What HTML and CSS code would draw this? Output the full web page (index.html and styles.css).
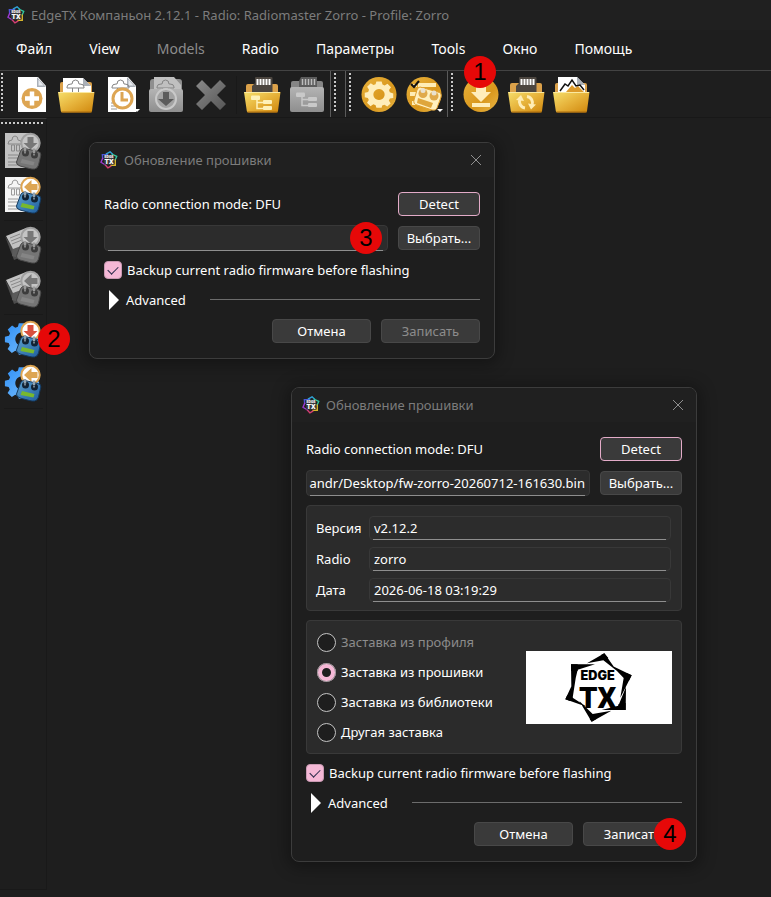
FILE: index.html
```html
<!DOCTYPE html>
<html lang="ru">
<head>
<meta charset="utf-8">
<title>EdgeTX Компаньон 2.12.1</title>
<link rel="stylesheet" href="styles.css">
</head>
<body>
<svg class="defs" width="0" height="0" aria-hidden="true">
  <defs>
    <linearGradient id="gold" x1="0" y1="0" x2="1" y2="1"><stop offset="0" stop-color="#f6df6c"/><stop offset=".5" stop-color="#e6b23a"/><stop offset="1" stop-color="#cf860c"/></linearGradient>
    <linearGradient id="amber" x1="0" y1="0" x2="1" y2="1"><stop offset="0" stop-color="#e8b23c"/><stop offset=".6" stop-color="#d9971c"/><stop offset="1" stop-color="#e9b747"/></linearGradient>
    <linearGradient id="grey" x1="0" y1="0" x2="0" y2="1"><stop offset="0" stop-color="#b4b4b4"/><stop offset="1" stop-color="#8e8e8e"/></linearGradient>
    <linearGradient id="steel" x1="0" y1="0" x2="1" y2="1"><stop offset="0" stop-color="#8a8a8a"/><stop offset="1" stop-color="#565656"/></linearGradient>
    <linearGradient id="blue" x1="0" y1="0" x2="1" y2="1"><stop offset="0" stop-color="#5fa3d0"/><stop offset="1" stop-color="#1d5c9c"/></linearGradient>
    <linearGradient id="sky" x1="0" y1="0" x2="1" y2="1"><stop offset="0" stop-color="#2f8ff5"/><stop offset="1" stop-color="#7fc3ff"/></linearGradient>
    <symbol id="logo" viewBox="0 0 20 20">
      <g fill="none" stroke-width="1.5">
        <path d="M3 9 2.6 4l6.5 0" stroke="#4b57d8"/><path d="M6.5 3.4 11.2.9 14.4 4" stroke="#2fa3d8"/>
        <path d="M13 3.6 18.6 6 16.6 10.6" stroke="#2fc7a0"/><path d="M17 9.5v6.3h-5.4" stroke="#d8b62c"/>
        <path d="M12.6 16.6 8.8 18.8 5 14.4" stroke="#d83f72"/><path d="M3.2 7.6 1.1 12.6 6.2 15.6" stroke="#a03ad6"/>
      </g>
      <path d="M4.500 4.500h11v10.500h-11z" fill="#3a3a3c"/>
      <text x="10" y="7.600" class="logo-edge">EDGE</text>
      <text x="10" y="14.600" class="logo-tx">TX</text>
    </symbol>
    <symbol id="page" viewBox="0 0 38 38">
      <path d="M6 1h20l8 9v26H6z" fill="#fff"/><path d="M25 1l9 10h-9z" fill="#aab0b8"/><path d="M26.500 3.500l5 6h-5z" fill="#e8ebef"/>
    </symbol>
    <symbol id="sketch" viewBox="0 0 38 38">
      <path d="M10 11q0-3 4-3h1q0-4 3.500-4T22 8h1q4 0 4 3v1H10zM15.500 12v4M21.500 12v4M14 16.500h9" fill="none" stroke="#858585"/>
    </symbol>
    <symbol id="front" viewBox="0 0 38 38">
      <path d="M1 16h36.500l-2.500 19q-.2 1.500-2 1.500H6q-2 0-2.200-1.500z" fill="url(#gold)"/><path d="M1.500 16.500h35.500" stroke="#fbe9a0"/>
      <path d="M4.500 36h30" stroke="#a8690c"/>
    </symbol>
    <symbol id="card" viewBox="0 0 38 38">
      <path d="M12 2q0-1 1-1h15.500q1 0 1 1v16H9v-8l3-3z" class="card-body"/>
      <path d="M14.500 3v6M17.500 3v6M20.500 3v6M23.500 3v6M26.500 3v6" stroke-width="2" class="card-pins"/>
    </symbol>
    <symbol id="tree" viewBox="0 0 38 38">
      <g class="tree"><path d="M14 24v8.500h8M14 26.500h8" fill="none" stroke-width="1.500"/><rect x="8" y="19.500" width="9" height="4.500" rx="1"/><rect x="20" y="24" width="9" height="4" rx="1"/><rect x="20" y="30" width="9" height="4" rx="1"/></g>
    </symbol>
    <symbol id="gear" viewBox="-20 -20 40 40">
      <path fill-rule="evenodd" d="M-3.500-15h7l1.200 4.200 2.800 1.200L11.300-12 16-7.200l-2.600 3.800 1 2.900L19 1v6l-4.400.8-1.500 2.800L15.500 14.500 11 18.500 7.300 16 4.300 17.200 3.500 20h-7l-1-3.200-3-1.200L-11.300 18-16 13.500l2.400-3.800L-14.800 7-19 6V0l4.500-1 1.200-3L-15.800-8-11-12.500l3.600 2.400 2.800-1.100zM0-5a7.500 7.500 0 1 0 .01 0z" transform="translate(0 -2.500)"/>
    </symbol>
    <symbol id="down" viewBox="0 0 22 22"><circle cx="11" cy="11" r="9.200" class="ring"/><path d="M8 5h6v6h4l-7 6.500L4 11h4z" class="arrow"/></symbol>
    <symbol id="left" viewBox="0 0 22 22"><circle cx="11" cy="11" r="9.200" class="ring"/><path d="M18 8v6h-6v4L4.500 11 12 4v4z" class="arrow"/></symbol>
    <symbol id="handset" viewBox="0 0 26 24">
      <path d="M4.500 5q1-3 4.500-2.500l13 3q3.300.8 2.800 3.500L22.500 19q-1 3.500-4 4-2 .3-5-.5L4 20q-4-1.500-3.500-4z" class="shell"/>
      <circle cx="9.500" cy="7" r="3.500" class="well"/><circle cx="18.500" cy="9" r="3.500" class="well"/>
      <path d="M9 1v4.500M18 2.500v4.500" stroke-width="2.500" class="stick"/><path d="M9 5.500v2M18 7.500v2" stroke-width="1.500" class="stick"/>
      <path d="M6 13l12.500 3-1 3.500L4.500 17z" class="lcd"/>
    </symbol>
    <symbol id="sheet" viewBox="0 0 38 38">
      <path d="M1 1h25v35H1z" class="paper"/>
      <path d="M4 12q0-4 4-4 0-4 3-4t3 4q4 0 4 4zM7.500 13v6h3v-6zM12.500 13v6h3v-6zM4 23h10M4 26h10M4 30h12M4 33h12" class="ink"/>
    </symbol>
    <symbol id="cards" viewBox="0 0 38 38">
      <path d="M1 10l14 22-5 2z" fill="#4c4c4c"/><path d="M9 12l17 2-4 20-14-4z" fill="#5b5b5b"/>
      <path d="M2 10L22 2l6 14-19 7z" class="paper"/><path d="M6 12l10-4M7 15l10-4M8 18l10-4" class="ink"/>
    </symbol>
  </defs>
</svg>

<div class="app">
  <header class="titlebar">
    <svg class="logo" aria-hidden="true"><use href="#logo"/></svg>
    <h1>EdgeTX Компаньон 2.12.1 - Radio: Radiomaster Zorro - Profile: Zorro</h1>
  </header>

  <nav class="menu" aria-label="Главное меню">
    <button>Файл</button><button>View</button><button disabled>Models</button><button>Radio</button><button>Параметры</button><button>Tools</button><button>Окно</button><button>Помощь</button>
  </nav>

  <div class="toolbars">
    <div class="toolbar">
      <span class="grip"></span>
      <button class="tool" aria-label="Создать"><svg viewBox="0 0 38 38"><use href="#page"/><circle cx="20" cy="22.500" r="10.500" fill="#dda552"/><path d="M20 15.500v14M13 22.500h14" stroke="#fff" stroke-width="4.500"/></svg></button>
      <button class="tool" aria-label="Открыть"><svg viewBox="0 0 38 38"><path d="M3 18V8q0-2 2-2h28q2 0 2 2v10z" fill="#dba14a"/><path d="M6 2h20l8 8v8H6z" fill="#fff"/><path d="M26 2l8 8h-8z" fill="#aab0b8"/><use href="#sketch"/><use href="#front"/></svg></button>
      <button class="tool" aria-label="Недавние"><svg viewBox="0 0 38 38"><use href="#page"/><use href="#sketch"/><path d="M9 30h8M9 33h6M9 27h6" stroke="#999"/><circle cx="20.500" cy="22.500" r="9.500" fill="#fff" stroke="#dda552" stroke-width="3"/><path d="M20 16v8h6" fill="none" stroke="#dda552" stroke-width="3"/></svg><i class="caret"></i></button>
      <button class="tool" aria-label="Сохранить" disabled><svg viewBox="0 0 38 38"><path d="M3 6q0-3 3-3h26q3 0 3 3v10H3z" fill="#8f8f8f"/><path d="M7 1h20l7 8v8H7z" fill="#c0c0c0"/><use href="#sketch"/><path d="M2 15q0-2 2-2h30q2 0 2 2v19q0 2-2 2H4q-2 0-2-2z" fill="url(#grey)"/><circle cx="19" cy="23" r="10" fill="#a3a3a3" stroke="#c9c9c9" stroke-width="2"/><path d="M16 16h6v7h5l-8 7-8-7h5z" fill="#5b5b5b"/></svg></button>
      <button class="tool" aria-label="Закрыть" disabled><svg viewBox="0 0 38 38"><path d="M10 4l9 9 9-9 6 6-9 9 9 9-6 6-9-9-9 9-6-6 9-9-9-9z" fill="url(#steel)"/></svg></button>
      <span class="divider"></span>
      <button class="tool" aria-label="Открыть SD-карту"><svg viewBox="0 0 38 38"><path d="M3 17V10q0-2 2-2h28q2 0 2 2v7z" fill="#dba14a"/><use href="#card"/><use href="#front"/><use href="#tree"/></svg></button>
      <button class="tool off" aria-label="Синхронизировать SD-карту" disabled><svg viewBox="0 0 38 38"><path d="M3 17V7q0-2 2-2h28q2 0 2 2v10z" fill="#858585"/><path d="M2 13q0-2 2-2h30q2 0 2 2v21q0 2-2 2H4q-2 0-2-2z" fill="url(#grey)"/><path d="M11 11V5l2-4h16v10z" fill="#5c5c5c"/><path d="M14.500 3v6M17.500 3v6M20.500 3v6M23.500 3v6M26.500 3v6" stroke="#bdbdbd" stroke-width="1.500"/><use href="#tree" y="-3"/></svg></button>
    </div>
    <div class="toolbar empty"><span class="grip"></span></div>
    <div class="toolbar">
      <span class="grip"></span>
      <button class="tool" aria-label="Настройки"><svg viewBox="0 0 38 38"><circle cx="19" cy="18.500" r="17.500" fill="url(#amber)"/><use href="#gear" x="4" y="3.500" width="30" height="30" fill="#ffeebb"/></svg></button>
      <button class="tool" aria-label="Профили"><svg viewBox="0 0 38 38"><circle cx="19" cy="18.500" r="17.500" fill="url(#amber)"/><path d="M13 7h18v4H13zM5 16h6v4H5zM7 25h6v4H7zM8 8h4v3H8z" fill="#ffedb5"/><path d="M15 11l18 5q4 1 3 5l-4 11q-1 3-5 2l-15-5q-4-1-3-5l3-10q1-3 3-3z" fill="#fff0bf" stroke="#e0a030"/><path d="M13 22l15 5-2 5-14-5z" fill="#dfa63c"/><circle cx="18" cy="17.500" r="4.500" fill="#e0a94a"/><circle cx="29" cy="20" r="4.500" fill="#e0a94a"/><circle cx="18" cy="14.500" r="2.500" fill="#e9e1cf"/><circle cx="29" cy="17" r="2.500" fill="#e9e1cf"/><path d="M6 8l3 3 5-6" fill="none" stroke="#111" stroke-width="2"/></svg><i class="caret"></i></button>
    </div>
    <div class="toolbar">
      <span class="grip"></span>
      <button class="tool" aria-label="Загрузить"><svg viewBox="0 0 38 38"><circle cx="19" cy="18.500" r="17.500" fill="url(#amber)"/><path d="M14 7h10v9h5L19 26 9 16h5zM10 27h18v4H10z" fill="#ffeebb"/></svg><b class="badge above">1</b></button>
      <button class="tool" aria-label="Обновить SD-карту"><svg viewBox="0 0 38 38"><path d="M3 17V9q0-2 2-2h28q2 0 2 2v8z" fill="#dba14a"/><use href="#card"/><use href="#front"/><path d="M18 32a6.500 6.500 0 0 1-5-9" fill="none" stroke="#ffedb5" stroke-width="3"/><path d="M9 24l5-5 3 6z" fill="#ffedb5"/><path d="M20 20.500a6.500 6.500 0 0 1 5 9" fill="none" stroke="#ffedb5" stroke-width="3"/><path d="M29 28.500l-5 5-3-6z" fill="#ffedb5"/></svg></button>
      <button class="tool" aria-label="Просмотр логов"><svg viewBox="0 0 38 38"><path d="M3 17V9q0-2 2-2h28q2 0 2 2v8z" fill="#dba14a"/><path d="M6 1h19l8 8v8H6z" fill="#fff"/><path d="M25 1l8 8h-8z" fill="#aab0b8"/><path d="M14 16l6-7 3 3 3-2 6 6z" fill="#dc9a2a"/><path d="M8 15l5-7 3 2 4-6 4 6 4-1 4 5" fill="none" stroke="#111" stroke-width="1.500"/><use href="#front"/></svg></button>
    </div>
  </div>

  <div class="workspace">
    <aside class="sidebar">
      <span class="grip wide"></span>
      <button class="tool off" aria-label="Записать модели" disabled><svg viewBox="0 0 38 38"><use href="#sheet"/><use href="#down" x="15.500" y="0" width="22" height="22"/><use href="#handset" x="12" y="14" width="26" height="24"/></svg></button>
      <button class="tool" aria-label="Считать модели"><svg viewBox="0 0 38 38"><use href="#sheet"/><use href="#left" x="15.500" y="0" width="22" height="22"/><use href="#handset" x="12" y="14" width="26" height="24"/></svg></button>
      <span class="rule"></span>
      <button class="tool off" aria-label="Записать резервную копию" disabled><svg viewBox="0 0 38 38"><use href="#cards"/><use href="#down" x="15.500" y="0" width="22" height="22"/><use href="#handset" x="12" y="14" width="26" height="24"/></svg></button>
      <button class="tool off" aria-label="Считать резервную копию" disabled><svg viewBox="0 0 38 38"><use href="#cards"/><use href="#left" x="15.500" y="0" width="22" height="22"/><use href="#handset" x="12" y="14" width="26" height="24"/></svg></button>
      <span class="rule"></span>
      <button class="tool write" aria-label="Записать прошивку"><svg viewBox="0 0 38 38"><use href="#gear" x="0" y="0" width="36" height="38" fill="url(#sky)"/><use href="#down" x="15.500" y="0" width="22" height="22"/><use href="#handset" x="12" y="14" width="26" height="24"/></svg><b class="badge beside">2</b></button>
      <button class="tool" aria-label="Считать прошивку"><svg viewBox="0 0 38 38"><use href="#gear" x="0" y="0" width="36" height="38" fill="url(#sky)"/><use href="#left" x="15.500" y="0" width="22" height="22"/><use href="#handset" x="12" y="14" width="26" height="24"/></svg></button>
      <span class="rule"></span>
    </aside>
    <main class="desktop">
      <section class="dialog first" aria-labelledby="t1">
        <header class="dialog-title">
          <svg class="logo" aria-hidden="true"><use href="#logo"/></svg>
          <h2 id="t1">Обновление прошивки</h2>
          <button class="close" aria-label="Закрыть"><svg viewBox="0 0 12 12"><path d="M1 1l10 10M11 1L1 11"/></svg></button>
        </header>
        <form class="dialog-body">
          <div class="row"><span class="grow">Radio connection mode: DFU</span><button type="button" class="btn side focus">Detect</button></div>
          <div class="row"><span class="field grow"><input type="text" aria-label="Файл прошивки"><b class="badge inside">3</b></span><button type="button" class="btn side">Выбрать...</button></div>
          <label class="check"><input type="checkbox" checked>Backup current radio firmware before flashing</label>
          <div class="more"><button type="button">Advanced</button><hr></div>
          <div class="actions"><button type="button" class="btn">Отмена</button><button type="button" class="btn" disabled>Записать</button></div>
        </form>
      </section>

      <section class="dialog second" aria-labelledby="t2">
        <header class="dialog-title">
          <svg class="logo" aria-hidden="true"><use href="#logo"/></svg>
          <h2 id="t2">Обновление прошивки</h2>
          <button class="close" aria-label="Закрыть"><svg viewBox="0 0 12 12"><path d="M1 1l10 10M11 1L1 11"/></svg></button>
        </header>
        <form class="dialog-body">
          <div class="row"><span class="grow">Radio connection mode: DFU</span><button type="button" class="btn side focus">Detect</button></div>
          <div class="row"><span class="field grow"><input type="text" class="path" aria-label="Файл прошивки" value="andr/Desktop/fw-zorro-20260712-161630.bin"></span><button type="button" class="btn side">Выбрать...</button></div>
          <div class="group info">
            <label for="ver">Версия</label><span class="field"><input id="ver" type="text" value="v2.12.2" readonly></span>
            <label for="radio">Radio</label><span class="field"><input id="radio" type="text" value="zorro" readonly></span>
            <label for="date">Дата</label><span class="field"><input id="date" type="text" value="2026-06-18 03:19:29" readonly></span>
          </div>
          <div class="group splash">
            <div class="options">
              <label class="off"><input type="radio" name="splash" disabled>Заставка из профиля</label>
              <label><input type="radio" name="splash" checked>Заставка из прошивки</label>
              <label><input type="radio" name="splash">Заставка из библиотеки</label>
              <label><input type="radio" name="splash">Другая заставка</label>
            </div>
            <svg class="preview" viewBox="0 0 438 219" role="img" aria-label="EdgeTX">
              <path d="M0 0h438v219H0z" fill="#fff"/>
              <path d="M135 40h72l-52 16-6 26-13 25zM183 37l52-30 37 52-40-31zM258 44l59 29-34 67 10-59zM300 108l-1 69-72 0 50-13zM160 150l40 39 56-10-59 33zM150 76l-10 64 42 27-64-22z"/>
              <path d="M135 40h20v20h-20zM225 12l10-5 12 14-10 8zM302 66l15 7-8 16-14-9zM277 160l22-4v21h-22zM191 204l6 8 14-8-11-14zM124 132l-6 13 14 5 9-10z"/>
              <text x="215" y="88" class="preview-edge">EDGE</text>
              <text x="215" y="171" class="preview-tx">TX</text>
            </svg>
          </div>
          <label class="check"><input type="checkbox" checked>Backup current radio firmware before flashing</label>
          <div class="more"><button type="button">Advanced</button><hr></div>
          <div class="actions"><button type="button" class="btn">Отмена</button><button type="button" class="btn">Записать<b class="badge corner">4</b></button></div>
        </form>
      </section>
    </main>
  </div>
  <footer class="status"></footer>
</div>
</body>
</html>
```

FILE: styles.css
```css
* { box-sizing: border-box; }

body {
  margin: 0;
  background: #1e1e1e;
  color: #fff;
  font: 13px/20px "Noto Sans", "Open Sans", sans-serif;
}

button, input { font: inherit; color: inherit; }
button { border: 0; padding: 0; background: none; }
h1, h2 { margin: 0; font-size: 13px; font-weight: 400; color: #7c7c7c; }
svg { display: block; }
.defs { position: absolute; }

.app { display: flex; flex-direction: column; min-height: 100vh; }

.titlebar {
  display: flex;
  align-items: center;
  gap: 6px;
  height: 30px;
  padding: 0 7px;
  background: #202020;
}
.logo { width: 18px; height: 18px; flex: none; }
.logo-edge { font: 900 4px Roboto, sans-serif; fill: #fff; text-anchor: middle; }
.logo-tx { font: 900 8px Roboto, sans-serif; fill: #fff; text-anchor: middle; }

.menu {
  display: flex;
  gap: 37px;
  height: 40px;
  padding: 0 16px 2px;
  font-size: 14px;
}
.menu button:disabled { color: #8c8c8c; }

.toolbars {
  display: flex;
  height: 48px;
  border-top: 1px solid #434343;
  border-bottom: 1px solid #181818;
}
.toolbar {
  display: flex;
  align-items: flex-start;
  gap: 7px;
  padding: 5px 4px 0 1px;
  border-right: 1px solid #5a5a5a;
}
.toolbar.empty { padding-right: 7px; }
.toolbar:last-child { border-right: 0; }
.grip {
  width: 2px;
  height: 38px;
  margin: -3px 2px 0;
  background: repeating-linear-gradient(#c8c8c8 0 2px, transparent 2px 4px);
}
.toolbar:first-child .grip { margin: -3px 2px 0 0; }
.tool { position: relative; width: 38px; height: 38px; flex: none; }
.tool svg { width: 38px; height: 38px; }
.divider { width: 1px; height: 38px; background: #191919; margin: 0 -1px; }
.caret {
  position: absolute;
  right: 0;
  bottom: 2px;
  border: 3px solid transparent;
  border-top-color: #fff;
  border-bottom: 0;
}

.tool {
  --tree: #fff1b8;
  --ring-fill: #fff;
  --ring: #dda552;
  --arrow: #dda552;
  --shell: url(#blue);
  --edge: #14395f;
  --well: #112233;
  --stick: #93a3ae;
  --lcd: #78b82e;
  --paper: #f5f5f5;
  --ink: #9a9a9a;
}
.tool.off {
  --tree: #c9c9c9;
  --ring-fill: #c4c4c4;
  --ring: #a0a0a0;
  --arrow: #777777;
  --shell: #757575;
  --edge: #484848;
  --well: #3c3c3c;
  --stick: #9a9a9a;
  --lcd: #858585;
  --paper: #c2c2c2;
  --ink: #888888;
}
.tool.write { --arrow: #d8503f; }
.card-body { fill: #4c4640; }
.card-pins { stroke: #fff; }
.tree { fill: var(--tree); stroke: var(--tree); }
.tree rect { stroke: none; }
.ring { fill: var(--ring-fill); stroke: var(--ring); stroke-width: 2; }
.arrow { fill: var(--arrow); }
.shell { fill: var(--shell); stroke: var(--edge); }
.well { fill: var(--well); }
.stick { stroke: var(--stick); }
.lcd { fill: var(--lcd); }
.paper { fill: var(--paper); }
.ink { fill: none; stroke: var(--ink); }

.workspace { display: flex; flex: 1; }
.sidebar {
  display: flex;
  flex-direction: column;
  align-items: center;
  gap: 6px;
  width: 47px;
  padding-top: 3px;
  border-top: 1px solid #3c3c3c;
  border-right: 1px solid #191919;
}
.grip.wide {
  align-self: flex-start;
  width: 43px;
  height: 2px;
  margin: 0 0 2px 1px;
  background: repeating-linear-gradient(90deg, #c8c8c8 0 2px, transparent 2px 4px);
}
.rule { width: 39px; height: 1px; margin-bottom: -1px; background: #191919; }

.desktop { position: relative; flex: 1; }
.status { width: 47px; height: 8px; border-top: 1px solid #191919; }

.dialog {
  position: absolute;
  width: 406px;
  border: 1px solid #3c3c3c;
  border-radius: 8px;
  background: #1e1e1e;
  box-shadow: 0 2px 16px 4px #00000050;
}
.first { left: 42px; top: 24px; }
.second { left: 244px; top: 269px; }
.dialog-title {
  display: flex;
  align-items: center;
  gap: 6px;
  height: 34px;
  padding: 0 12px 0 10px;
  border-radius: 7px 7px 0 0;
  background: #202020;
}
.dialog-title h2 { flex: 1; }
.close svg { width: 12px; height: 12px; fill: none; stroke: #8f8f8f; }
.dialog-body {
  display: flex;
  flex-direction: column;
  gap: 9px;
  padding: 15px 14px;
}
.row { display: flex; align-items: center; gap: 10px; }
.grow { flex: 1; }
.btn {
  position: relative;
  width: 99px;
  height: 24px;
  line-height: 20px;
  border: 1px solid #484848;
  border-radius: 4px;
  background: #3a3a3a;
}
.btn.side { width: 82px; }
.btn.focus { border-color: #e3abc8; }
.btn:disabled { color: #8c8c8c; }

.field { position: relative; display: flex; }
.field::after {
  content: "";
  position: absolute;
  left: 4px;
  right: 5px;
  bottom: 0;
  height: 1px;
  background: #8e8e8e;
}
.field input {
  width: 100%;
  height: 26px;
  padding: 0 4px;
  border: 1px solid #383838;
  border-radius: 4px;
  background: #2c2c2c;
}
.field .path { padding: 0 4px 0 2px; text-align: right; }

.group { border: 1px solid #393939; border-radius: 4px; background: #2b2b2b; }
.info {
  display: grid;
  grid-template-columns: 46px 1fr;
  gap: 7px;
  padding: 10px 10px 8px 9px;
  align-items: center;
}
.info .field input { height: 24px; }
.splash {
  display: flex;
  align-items: center;
  justify-content: space-between;
  padding: 6px 9px 6px 10px;
}
.options label { display: flex; align-items: center; gap: 5px; height: 30px; }
.options .off { color: #8c8c8c; }
.options input {
  appearance: none;
  width: 19px;
  height: 19px;
  margin: 0;
  border: 1px solid #c4c4c4;
  border-radius: 50%;
  background: #1e1e1e;
}
.options input:checked { border: 5px solid #f5b8d6; outline: 1px solid #8f8f8f; outline-offset: -1px; }
.preview { width: 146px; height: 73px; }
.preview-edge { font: 900 38px Inter, sans-serif; text-anchor: middle; }
.preview-tx { font: 900 88px Roboto, sans-serif; text-anchor: middle; }

.check { display: flex; align-items: center; gap: 5px; }
.check input {
  appearance: none;
  width: 18px;
  height: 18px;
  margin: 0;
  border: 1px solid #c99ab2;
  border-radius: 4px;
  background: #f5b8d6;
  display: grid;
  place-items: center;
}
.check input::after {
  content: "";
  width: 9px;
  height: 5px;
  margin-top: -3px;
  border: solid #2a2a4a;
  border-width: 0 0 1px 1px;
  transform: rotate(-45deg);
}
.more { display: flex; align-items: center; gap: 24px; height: 21px; padding-left: 5px; }
.more button { display: flex; align-items: center; gap: 7px; }
.more button::before {
  content: "";
  border: 10px solid transparent;
  border-left-color: #fff;
  border-right: 0;
}
.more hr { flex: 1; margin: 0; border: 0; height: 1px; background: #6c6c6c; }
.actions { display: flex; justify-content: flex-end; gap: 10px; }

.badge {
  position: absolute;
  z-index: 1;
  width: 32px;
  height: 32px;
  border-radius: 50%;
  background: #e60808;
  color: #000;
  font: 400 24px/32px "Liberation Sans", Arial, sans-serif;
  text-align: center;
}
.above { left: 2px; top: -20px; }
.beside { left: 34px; top: 3px; }
.inside { right: 6px; top: -3px; }
.corner { right: -5px; top: -5px; }
```
